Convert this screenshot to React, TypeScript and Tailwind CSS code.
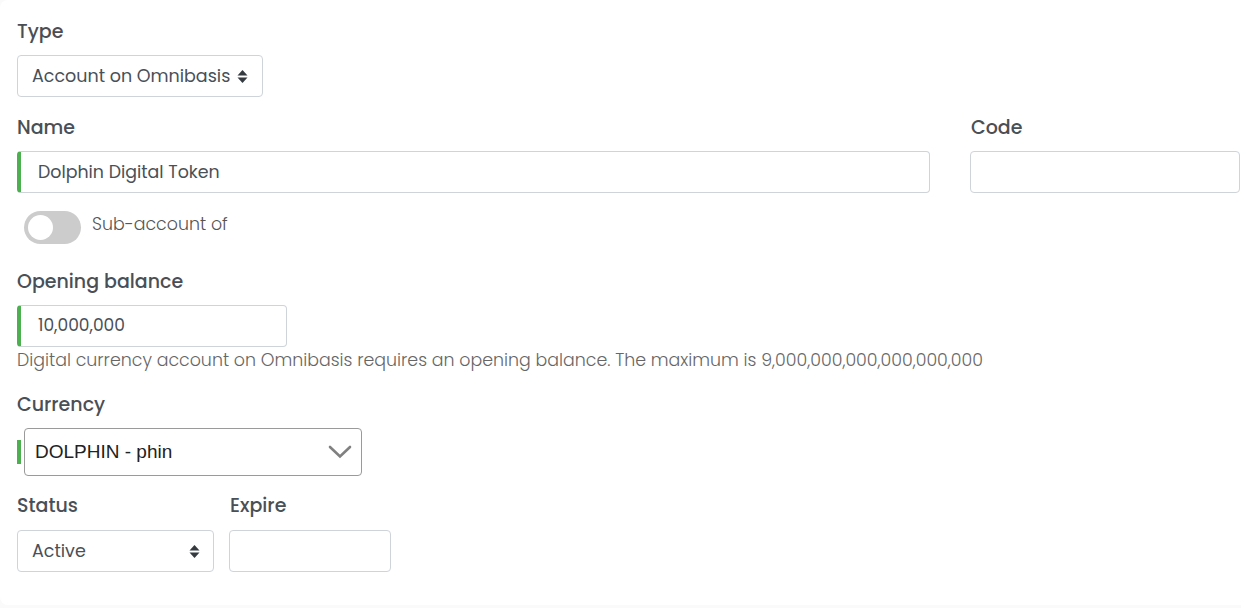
import { useState } from "react";

const FONT = "font-['Poppins','Open_Sans',sans-serif]";

function UpDown() {
  return (
    <svg width="11" height="15" viewBox="0 0 11 15" className="shrink-0">
      <path d="M5.5 1 L10.5 6.5 H0.5 Z" fill="#343a40" />
      <path d="M5.5 14 L10.5 8.5 H0.5 Z" fill="#343a40" />
    </svg>
  );
}

function Label({ children }: { children: React.ReactNode }) {
  return (
    <div className="text-[19px] leading-6 font-medium text-[#4a4f55]">{children}</div>
  );
}

export default function App() {
  const [sub, setSub] = useState(false);

  return (
    <div className={`min-h-screen bg-[#fafafa] ${FONT}`}>
      <div className="bg-white rounded-l-lg min-h-[605px] pl-[17px] pr-px pt-[20px]">
        {/* Type */}
        <Label>Type</Label>
        <div className="mt-[11px] w-[246px] h-[42px] border border-[#ced4da] rounded flex items-center justify-between pl-[14px] pr-[14px] text-[17.5px] text-[#495057]">
          <span>Account on Omnibasis</span>
          <UpDown />
        </div>

        {/* Name / Code */}
        <div className="mt-[19px] flex gap-10">
          <div className="w-[913px]">
            <Label>Name</Label>
            <div className="mt-[11px] h-[42px] border border-[#ced4da] border-l-4 border-l-[#4caf50] rounded flex items-center pl-[17px] text-[17.4px] text-[#495057]">
              Dolphin Digital Token
            </div>
          </div>
          <div className="w-[270px]">
            <div className="pl-px">
              <Label>Code</Label>
            </div>
            <div className="mt-[11px] h-[42px] border border-[#ced4da] rounded" />
          </div>
        </div>

        {/* Sub-account toggle */}
        <div className="mt-[18px] flex items-center pl-[7px]">
          <button
            onClick={() => setSub(!sub)}
            className={`w-[57px] h-[33px] rounded-full p-[4px] flex ${sub ? "bg-[#4caf50] justify-end" : "bg-[#cccccc] justify-start"}`}
          >
            <span className="w-[25px] h-[25px] rounded-full bg-white block" />
          </button>
          <span className="ml-[11px] -mt-[6px] text-[17.4px] font-light text-[#555]">Sub-account of</span>
        </div>

        {/* Opening balance */}
        <div className="mt-[26px]">
          <Label>Opening balance</Label>
        </div>
        <div className="mt-[11px] w-[270px] h-[42px] border border-[#ced4da] border-l-4 border-l-[#4caf50] rounded flex items-center pl-[17px] text-[17px] text-[#495057]">
          10,000,000
        </div>
        <div className="mt-[1px] text-[17.4px] leading-6 font-light text-[#666]">
          Digital currency account on Omnibasis requires an opening balance. The maximum is 9,000,000,000,000,000,000
        </div>

        {/* Currency */}
        <div className="mt-[21px]">
          <Label>Currency</Label>
        </div>
        <div className="mt-[11px] flex items-center">
          <div className="w-[4px] h-[24px] bg-[#4caf50] mr-[3px]" />
          <div className="w-[338px] h-[48px] border border-[#9a9a9a] rounded flex items-center justify-between pl-[10px] pr-[9px] font-['Liberation_Sans',Arial,sans-serif] text-[19px] text-[#222]">
            <span>DOLPHIN - phin</span>
            <svg width="24" height="14" viewBox="0 0 24 14">
              <path d="M2 2 L12 11.5 L22 2" fill="none" stroke="#808080" strokeWidth="2.6" strokeLinecap="round" />
            </svg>
          </div>
        </div>

        {/* Status / Expire */}
        <div className="mt-[18px] flex gap-[15px]">
          <div className="w-[197px]">
            <Label>Status</Label>
            <div className="mt-[12px] h-[42px] border border-[#ced4da] rounded flex items-center justify-between pl-[14px] pr-[13px] text-[17.5px] text-[#495057]">
              <span>Active</span>
              <UpDown />
            </div>
          </div>
          <div className="w-[162px]">
            <div className="pl-px">
              <Label>Expire</Label>
            </div>
            <div className="mt-[12px] h-[42px] border border-[#ced4da] rounded" />
          </div>
        </div>
      </div>
    </div>
  );
}
